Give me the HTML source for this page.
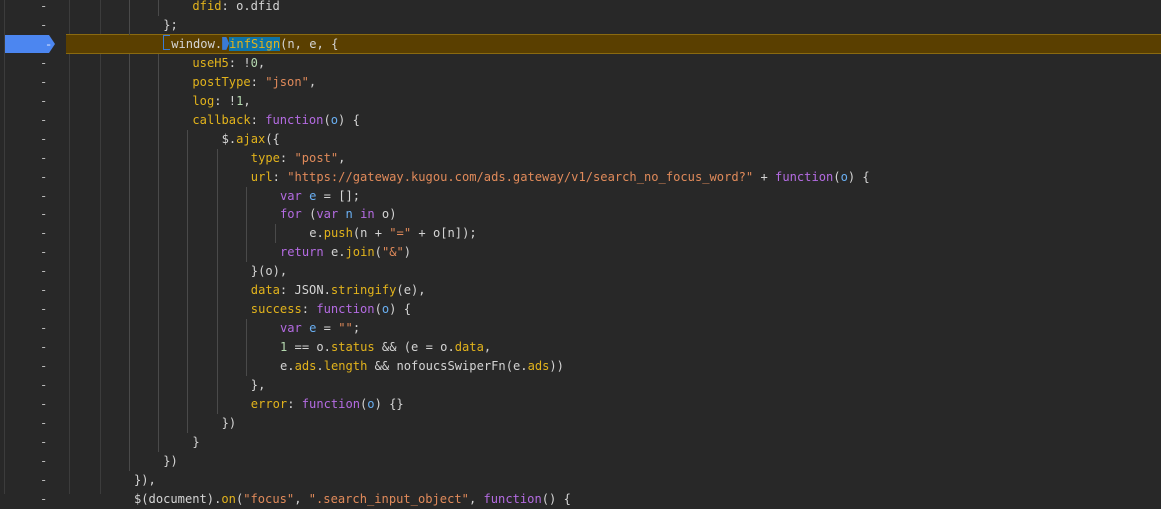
<!DOCTYPE html>
<html><head><meta charset="utf-8"><style>
body{margin:0;width:1161px;height:494px;background:#282828;overflow:hidden;position:relative;font-family:"DejaVu Sans Mono","Liberation Mono",monospace;font-size:12.1px;}
.vl{position:absolute;top:0;bottom:0;width:1px;background:#3c3c3c}
.row{position:absolute;left:0;width:1161px;height:19px;}
.code{position:absolute;white-space:pre;color:#d4d4d4;line-height:19px;top:0}
.g{position:absolute;top:0;height:19px;width:1px;background:#4a4a4a}
.dash{position:absolute;left:40px;top:0;color:#bbb;line-height:19px}
.p{color:#e2b31c}.s{color:#e08a5a}.k{color:#b46be2}.v{color:#6ab0f3}.n{color:#b5d9b0}
.hl{position:absolute;left:66px;top:34px;width:1095px;height:18px;background:#5a3f00;border-top:1px solid #8a6a10;border-bottom:1px solid #8a6a10}
</style></head><body>
<div class="vl" style="left:4px"></div>
<div class="vl" style="left:69px"></div>
<div class="vl" style="left:100px"></div>
<div class="hl"></div>
<svg style="position:absolute;left:5px;top:35px" width="50" height="18"><path d="M0 0H44L50 9L44 18H0Z" fill="#4c86f0"/><text x="40" y="13" fill="#e0e8ff" font-size="12" font-family="Liberation Mono">-</text></svg>
<div id="c"></div>
<script>
const L=[
[2,'<span class="p">dfid</span>: o.dfid'],
[1,'};'],
[1,'<span style="display:inline-block;width:6px;height:13px;border:1px solid #3a7bd5;border-right:none;vertical-align:-2px;margin-right:1px"></span>window.<span style="display:inline-block;width:7px;height:13px;background:#3a7bd5;vertical-align:-2px;clip-path:polygon(0 0,60% 0,100% 50%,60% 100%,0 100%)"></span><span style="background:#0e74a8" class="p">infSign</span>(n, e, {'],
[2,'<span class="p">useH5</span>: !<span class="n">0</span>,'],
[2,'<span class="p">postType</span>: <span class="s">"json"</span>,'],
[2,'<span class="p">log</span>: !<span class="n">1</span>,'],
[2,'<span class="p">callback</span>: <span class="k">function</span>(<span class="v">o</span>) {'],
[3,'$.<span class="p">ajax</span>({'],
[4,'<span class="p">type</span>: <span class="s">"post"</span>,'],
[4,'<span class="p">url</span>: <span class="s">"https://gateway.kugou.com/ads.gateway/v1/search_no_focus_word?"</span> + <span class="k">function</span>(<span class="v">o</span>) {'],
[5,'<span class="k">var</span> <span class="v">e</span> = [];'],
[5,'<span class="k">for</span> (<span class="k">var</span> <span class="v">n</span> <span class="k">in</span> o)'],
[6,'e.<span class="p">push</span>(n + <span class="s">"="</span> + o[n]);'],
[5,'<span class="k">return</span> e.<span class="p">join</span>(<span class="s">"&amp;"</span>)'],
[4,'}(o),'],
[4,'<span class="p">data</span>: JSON.<span class="p">stringify</span>(e),'],
[4,'<span class="p">success</span>: <span class="k">function</span>(<span class="v">o</span>) {'],
[5,'<span class="k">var</span> <span class="v">e</span> = <span class="s">""</span>;'],
[5,'<span class="n">1</span> == o.<span class="p">status</span> &amp;&amp; (e = o.<span class="p">data</span>,'],
[5,'e.<span class="p">ads</span>.<span class="p">length</span> &amp;&amp; nofoucsSwiperFn(e.<span class="p">ads</span>))'],
[4,'},'],
[4,'<span class="p">error</span>: <span class="k">function</span>(<span class="v">o</span>) {}'],
[3,'})'],
[2,'}'],
[1,'})'],
[0,'}),'],
[0,'$(document).<span class="p">on</span>(<span class="s">"focus"</span>, <span class="s">".search_input_object"</span>, <span class="k">function</span>() {']
];
let h='';
L.forEach((l,i)=>{
 const top=-3+18.95*i;
 h+=`<div class="row" style="top:${top}px">`;
 if(i!==2){h+='<span class="dash">-</span>';
 for(let j=0;j<l[0];j++)h+=`<div class="g" style="left:${129+29.2*j}px"></div>`;}
 h+=`<div class="code" style="left:${134+29.2*l[0]}px">${l[1]}</div></div>`;
});
document.getElementById('c').innerHTML=h;
</script>
</body></html>
